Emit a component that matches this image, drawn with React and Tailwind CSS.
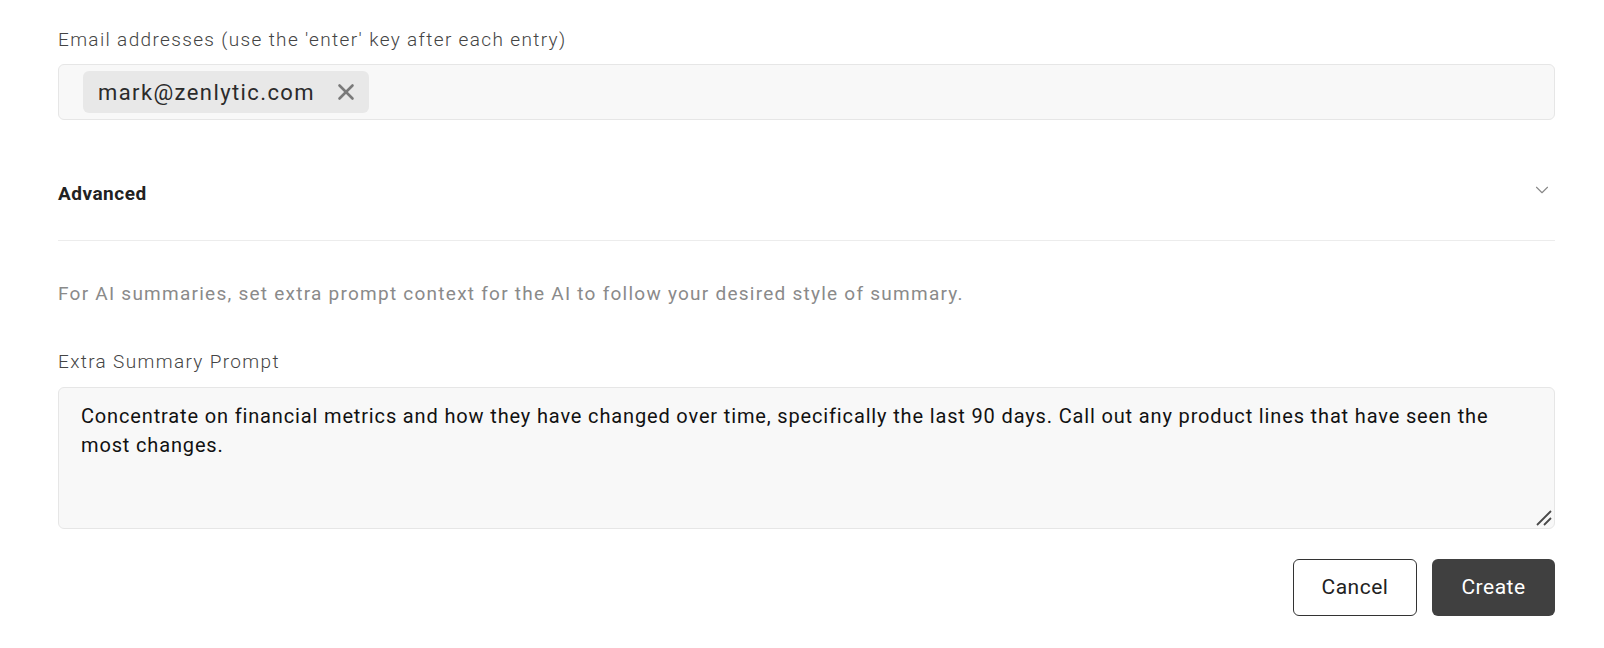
import { X, ChevronDown } from "lucide-react";

export default function App() {
  return (
    <div
      className="w-[1604px] h-[648px] bg-white rounded-bl-xl overflow-hidden"
      style={{ fontFamily: "Roboto, 'Liberation Sans', sans-serif" }}
    >
      <div className="px-[58px] pt-[26px] pr-[49px]">
        {/* Email recipients */}
        <label className="block text-[19px] font-light tracking-[1.35px] text-[#444] leading-[28px]">
          Email addresses (use the 'enter' key after each entry)
        </label>
        <div className="mt-[10px] h-[56px] bg-[#f8f8f8] border border-[#e6e6e6] rounded-md flex items-center px-[24px]">
          <span className="flex items-center gap-[18px] h-[42px] pl-[15px] pr-[10px] bg-[#e8e8e8] rounded-md text-[22px] tracking-[1.4px] text-[#2b2b2b]">
            mark@zenlytic.com
            <X className="w-[26px] h-[26px] text-[#7a7a7a]" strokeWidth={2.4} />
          </span>
        </div>

        {/* Advanced section */}
        <div className="mt-[54px] flex items-center justify-between h-[40px] box-content pb-[26px] border-b border-[#ececec]">
          <span className="text-[19px] font-bold text-[#222] tracking-[0.5px]">Advanced</span>
          <ChevronDown className="w-[22px] h-[22px] text-[#888] mr-[2px] -mt-[8px]" strokeWidth={1.2} />
        </div>

        <p className="mt-[39px] text-[19px] tracking-[1.25px] text-[#8a8a8a] leading-[28px]">
          For AI summaries, set extra prompt context for the AI to follow your desired style of summary.
        </p>

        <label className="block mt-[40px] text-[19px] font-light tracking-[1.35px] text-[#444] leading-[28px]">
          Extra Summary Prompt
        </label>
        <div className="relative mt-[11px]">
          <textarea
            className="block w-full h-[142px] bg-[#f8f8f8] border border-[#e6e6e6] rounded-md px-[22px] py-[14px] text-[20px] tracking-[0.85px] leading-[29px] text-[#111] outline-none resize-none"
            defaultValue="Concentrate on financial metrics and how they have changed over time, specifically the last 90 days. Call out any product lines that have seen the most changes."
          />
          <svg className="absolute right-[2px] bottom-[2px] w-[18px] h-[18px]" viewBox="0 0 18 18">
            <path d="M2 16 L16 2 M9 16 L16 9" stroke="#4a4a4a" strokeWidth="1.8" fill="none" />
          </svg>
        </div>

        <div className="mt-[30px] flex justify-end gap-[15px]">
          <button className="w-[124px] h-[57px] border border-[#333] rounded-md bg-white text-[21px] tracking-[0.5px] text-[#222]">
            Cancel
          </button>
          <button className="w-[123px] h-[57px] rounded-md bg-[#404040] text-[21px] tracking-[0.5px] text-white">
            Create
          </button>
        </div>
      </div>
    </div>
  );
}
